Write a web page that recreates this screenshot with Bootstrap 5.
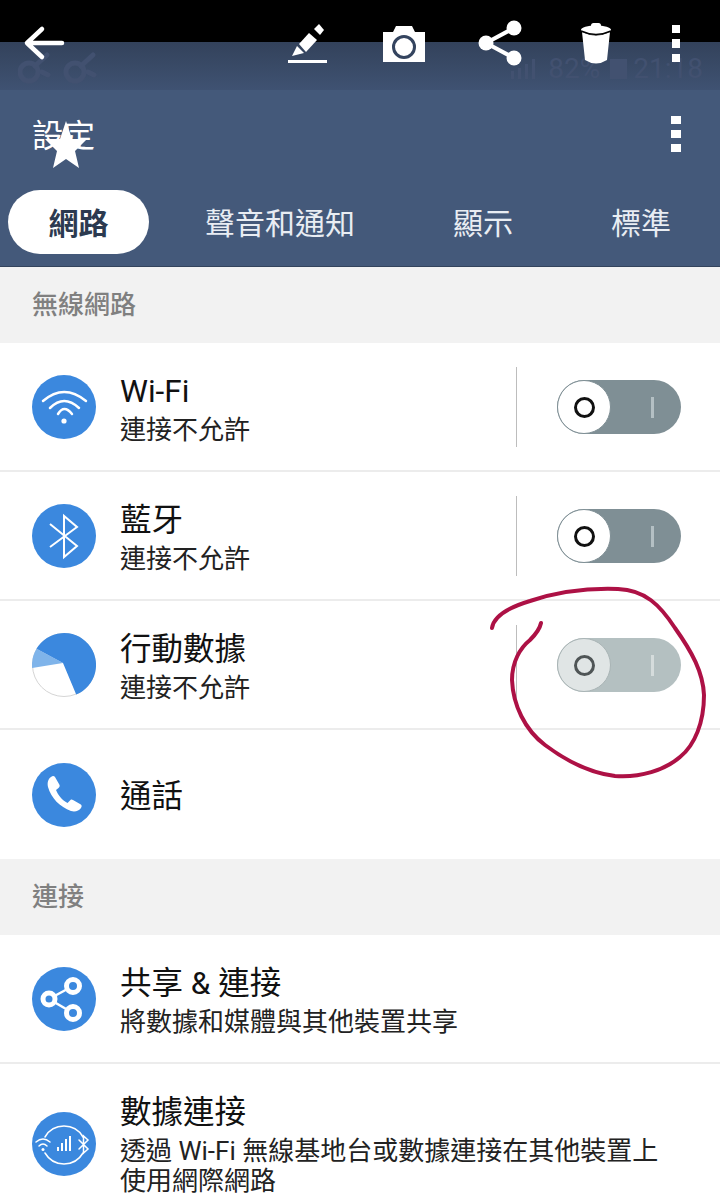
<!DOCTYPE html>
<html lang="zh-Hant">

<head>
    <meta charset="UTF-8">
    <meta name="viewport" content="width=device-width, initial-scale=1.0">
    <title>設定</title>
    <link rel="stylesheet" href="https://cdn.jsdelivr.net/npm/bootstrap@5.3.0/dist/css/bootstrap.min.css">
    <style>
        html, body { height: 1196px; overflow: hidden; }
        body {
            font-family: Roboto, "Noto Sans CJK TC", sans-serif;
            position: relative;
            background: #fff;
            color: #111;
        }

        /* screenshot tool bar lying over the phone screen */
        .shot-bar { position: absolute; top: 0; left: 0; width: 720px; height: 70px; }
        .shot-bar svg { display: block; }
        .shot-black { height: 42px; background: #000; }

        .status-band {
            height: 48px;
            background: linear-gradient(#33425b, #3f5272);
            padding: 6px 17px 0 18px;
            color: #425170;
            font-size: 28px;
            line-height: 40px;
        }
        .batt-block { width: 17px; height: 20px; background: #425170; margin: 0 6px 0 10px; }
        .sig-bars { width: 24px; height: 20px; margin-right: 13px; }

        .app-head { height: 177px; background: #44597a; border-bottom: 1px solid #33435c; color: #fff; }
        .app-title { height: 100px; padding: 25px 39px 0 32px; font-size: 31.5px; line-height: 44px; }
        .dots-btn { display: flex; flex-direction: column; gap: 6px; margin: 1px 0 0; }
        .dots-btn i { display: block; width: 10px; height: 8px; background: #fff; }
        .title-star { position: absolute; left: 45px; top: 120px; }

        .tab-strip { height: 64px; padding-left: 8px; font-size: 30px; }
        .tab-item { line-height: 67px; color: #e9edf3; white-space: nowrap; }
        .tab-on {
            width: 141px; height: 64px; border-radius: 32px; background: #fff; color: #2c3a50;
            font-weight: 700; text-align: center;
        }
        .tab-sound { margin-left: 56px; }
        .tab-show { margin-left: 98px; }
        .tab-std { margin-left: 98px; }

        .sect-head {
            height: 76px; background: #f2f2f2; color: #808080; padding-left: 32px;
            font-size: 26px; line-height: 77px; font-weight: 500;
        }

        .set-row.list-group-item {
            height: 129px; padding: 0 0 0 32px; border: 0; border-bottom: 2px solid #ececec;
            border-radius: 0; color: #111;
        }
        .set-row.row-last { border-bottom: 0; height: 132px; align-items: flex-start !important; padding-top: 27px; }
        .row-icon { width: 64px; height: 64px; flex: none; margin-right: 24px; }
        .row-text { margin-top: 6px; }
        .row-single { margin-top: 4px; }
        .row-main { font-size: 31.5px; line-height: 36px; }
        .row-sub { font-size: 26px; line-height: 30px; color: #222; margin-top: 5px; }
        .row-sub-wide { width: 545px; }
        .row-last .row-icon { margin-top: 21px; }
        .row-last .row-text { margin-top: 3px; }
        .row-last .row-main { line-height: 38px; }
        .row-last .row-sub { margin-top: 4px; }

        .switch-wrap {
            position: absolute; left: 516px; top: 24px; width: 165px; height: 80px;
            border-left: 1px solid #bdbdbd;
        }
        .fake-toggle {
            position: absolute; left: 40px; top: 13px; width: 124px; height: 54px; border-radius: 27px;
            background: #7f8f95;
        }
        .fake-toggle .knob {
            position: absolute; left: 0; top: 0; width: 54px; height: 54px; border-radius: 50%;
            background: #fff; border: 1px solid #7f8f95;
        }
        .fake-toggle .knob::after {
            content: ""; position: absolute; left: 16px; top: 16px; width: 21px; height: 21px;
            border: 3px solid #111; border-radius: 50%;
        }
        .fake-toggle .tick {
            position: absolute; left: 94px; top: 17px; width: 3px; height: 21px; background: #b4c0c4;
        }
        .fake-toggle.is-off { background: #b4c0c1; }
        .fake-toggle.is-off .knob { background: #e0e5e5; border-color: #a9b4b5; }
        .fake-toggle.is-off .knob::after { border-color: #4f5556; }
        .fake-toggle.is-off .tick { background: #d5dcdc; }

        .pen-mark { position: absolute; left: 0; top: 0; pointer-events: none; }
    </style>
</head>

<body>
    <div class="shot-black"></div>
    <div class="status-band d-flex justify-content-between">
        <svg width="80" height="40" viewBox="18 48 80 40">
            <g fill="none" stroke="#425170" stroke-width="5" stroke-linecap="round">
                <circle cx="29" cy="72" r="9"/>
                <circle cx="75" cy="72" r="9"/>
                <path d="M35 66 L47 55 M42 72 L48 75 M81 66 L93 55 M88 72 L94 75"/>
            </g>
        </svg>
        <div class="d-flex align-items-center">
            <svg class="sig-bars" viewBox="0 0 24 20"><path d="M0 12h3v8H0zM7 9h3v11H7zM14 5h3v15h-3zM21 0h3v20h-3z" fill="#425170"/></svg>
            <span>82%</span><span class="batt-block"></span><span>21:18</span>
        </div>
    </div>

    <div class="app-head">
        <div class="app-title d-flex justify-content-between">
            <span>設定</span>
            <div class="dots-btn"><i></i><i></i><i></i></div>
        </div>
        <div class="tab-strip d-flex">
            <div class="tab-item tab-on">網路</div>
            <div class="tab-item tab-sound">聲音和通知</div>
            <div class="tab-item tab-show">顯示</div>
            <div class="tab-item tab-std">標準</div>
        </div>
    </div>

    <div class="sect-head">無線網路</div>
    <div class="list-group list-group-flush">
        <div class="list-group-item set-row d-flex align-items-center position-relative">
            <svg class="row-icon" viewBox="0 0 64 64">
                <circle cx="32" cy="32" r="32" fill="#3b88de"/>
                <g fill="none" stroke="#fff" stroke-width="2.5" stroke-linecap="round">
                    <path d="M11 26 Q32 8 54 26"/>
                    <path d="M18 33 Q32 19 47 33"/>
                    <path d="M26 39 Q32 29 40 39"/>
                </g>
                <circle cx="32" cy="46" r="2.6" fill="#fff"/>
            </svg>
            <div class="row-text">
                <div class="row-main">Wi-Fi</div>
                <div class="row-sub">連接不允許</div>
            </div>
            <div class="switch-wrap"><div class="fake-toggle"><div class="knob"></div><div class="tick"></div></div></div>
        </div>
        <div class="list-group-item set-row d-flex align-items-center position-relative">
            <svg class="row-icon" viewBox="0 0 64 64">
                <circle cx="32" cy="32" r="32" fill="#3b88de"/>
                <path d="M18 20 L45 42 L32 53 V12 L45 23 L18 43" fill="none" stroke="#fff" stroke-width="2"/>
            </svg>
            <div class="row-text">
                <div class="row-main">藍牙</div>
                <div class="row-sub">連接不允許</div>
            </div>
            <div class="switch-wrap"><div class="fake-toggle"><div class="knob"></div><div class="tick"></div></div></div>
        </div>
        <div class="list-group-item set-row d-flex align-items-center position-relative">
            <svg class="row-icon" viewBox="0 0 64 64">
                <circle cx="32" cy="32" r="31.5" fill="#fff" stroke="#d5d5d5" stroke-width="1"/>
                <path d="M31 30 L0.1 35.1 A32 32 0 0 1 4.500 15.700 Z" fill="#7fb4ea"/>
                <path d="M31 30 L4.500 15.700 A32 32 0 1 1 44.200 61.600 Z" fill="#3b88de"/>
            </svg>
            <div class="row-text">
                <div class="row-main">行動數據</div>
                <div class="row-sub">連接不允許</div>
            </div>
            <div class="switch-wrap"><div class="fake-toggle is-off"><div class="knob"></div><div class="tick"></div></div></div>
        </div>
        <div class="list-group-item set-row d-flex align-items-center border-0">
            <svg class="row-icon" viewBox="0 0 64 64">
                <circle cx="32" cy="32" r="32" fill="#3b88de"/>
                <path d="M19 14 C16 16 15 20 16 24 C19 35 28 44 39 48 C43 49 47 48 49 45 C50 43 50 42 48 41 L41 37 C39.500 36 38.500 36.500 37.500 38 L35.500 40 C30 37 26 32 24 27 L26.500 25 C28 23.500 28 22.500 27 21 L23 14 C22 12.500 20.500 12.500 19 14 Z" fill="#fff"/>
            </svg>
            <div class="row-main row-single">通話</div>
        </div>
    </div>

    <div class="sect-head">連接</div>
    <div class="list-group list-group-flush">
        <div class="list-group-item set-row d-flex align-items-center">
            <svg class="row-icon" viewBox="0 0 64 64">
                <circle cx="32" cy="32" r="32" fill="#3b88de"/>
                <path d="M41 19 L17 32 L41 46" fill="none" stroke="#fff" stroke-width="2.500"/>
                <g fill="#3b88de" stroke="#fff" stroke-width="5">
                    <circle cx="41" cy="19" r="6.500"/>
                    <circle cx="17" cy="32" r="6"/>
                    <circle cx="41" cy="46" r="6.500"/>
                </g>
            </svg>
            <div class="row-text">
                <div class="row-main">共享 &amp; 連接</div>
                <div class="row-sub">將數據和媒體與其他裝置共享</div>
            </div>
        </div>
        <div class="list-group-item set-row row-last d-flex">
            <svg class="row-icon" viewBox="0 0 64 64">
                <circle cx="32" cy="32" r="32" fill="#3b88de"/>
                <g fill="none" stroke="#fff" stroke-width="1.500" stroke-linecap="round">
                    <path d="M13 25 A22 22 0 0 1 51 25"/>
                    <path d="M13 41 A22 22 0 0 0 51 41"/>
                    <path d="M4 30 Q11 24 18 30"/>
                    <path d="M7 34 Q11 30 15 34"/>
                    <path d="M47 28 L56 37 L51.500 41 V24 L56 28 L47 37"/>
                </g>
                <circle cx="11" cy="37.500" r="1.500" fill="#fff"/>
                <path d="M25 35h2v4h-2zM29 31h2v8h-2zM33 27h2v12h-2zM37 24h2v15h-2z" fill="#fff"/>
            </svg>
            <div class="row-text">
                <div class="row-main">數據連接</div>
                <div class="row-sub row-sub-wide">透過 Wi-Fi 無線基地台或數據連接在其他裝置上使用網際網路</div>
            </div>
        </div>
    </div>

    <!-- star sticker from the screenshot editor -->
    <svg class="title-star" width="42" height="50" viewBox="0 0 42 50">
        <path d="M21 1 L27 19 L42 19 L30 31 L34 48 L21 39 L8 48 L12 31 L0 19 L15 19 Z" fill="#fff"/>
    </svg>

    <div class="shot-bar">
        <svg width="720" height="70" viewBox="0 0 720 70">
            <path d="M62 43 H28 M42 29 L27 43 L42 57" fill="none" stroke="#fff" stroke-width="4.500" stroke-linecap="round" stroke-linejoin="round"/>

            <!-- pen -->
            <g fill="#fff">
                <path d="M292 56 L297 46 L304 53 Z"/>
                <path d="M299 44 L309 33 L317 40 L306 52 Z"/>
                <path d="M314 29 L319 24 L324 30 L320 35 Z"/>
                <rect x="288" y="60" width="39" height="3"/>
            </g>

            <!-- camera -->
            <path d="M383 32 H393 L396 26 H412 L415 32 H425 V62 H383 Z" fill="#fff"/>
            <circle cx="404" cy="47" r="10.500" fill="none" stroke="#34445f" stroke-width="3"/>

            <!-- share -->
            <g fill="#fff">
                <circle cx="486" cy="43" r="7.500"/>
                <circle cx="514" cy="28" r="7.500"/>
                <circle cx="514" cy="58" r="7.500"/>
            </g>
            <path d="M486 43 L514 28 M486 43 L514 58" stroke="#fff" stroke-width="4"/>

            <!-- trash -->
            <rect x="591" y="23" width="10" height="5" rx="2.500" fill="#fff"/>
            <ellipse cx="596" cy="30" rx="15" ry="4.500" fill="#fff"/>
            <path d="M582 32 Q596 39 610 32 L607 60 Q596 67 585 60 Z" fill="#fff"/>
            <path d="M581 31 Q596 38 611 31" fill="none" stroke="#000" stroke-width="1.500"/>

            <!-- dots -->
            <rect x="672" y="25" width="8" height="8" fill="#fff"/>
            <rect x="672" y="39" width="8" height="9" fill="#fff"/>
            <rect x="672" y="54" width="8" height="8" fill="#fff"/>
        </svg>
    </div>

    <!-- hand drawn circle -->
    <svg class="pen-mark" width="720" height="1196" viewBox="0 0 720 1196">
        <path d="M492 628 C494 615 510 607 530 601 C560 591 590 588 618 589 C645 590 660 605 675 628 C692 652 703 672 704 695 C704 722 695 745 680 757 C665 770 640 778 615 776 C590 773 565 760 545 745 C525 730 513 705 512 680 C512 662 520 648 530 640 C536 634 540 628 541 623" fill="none" stroke="#ad1145" stroke-width="4" stroke-linecap="round"/>
    </svg>

    <script src="https://cdn.jsdelivr.net/npm/bootstrap@5.3.0/dist/js/bootstrap.bundle.min.js"></script>
</body>

</html>
